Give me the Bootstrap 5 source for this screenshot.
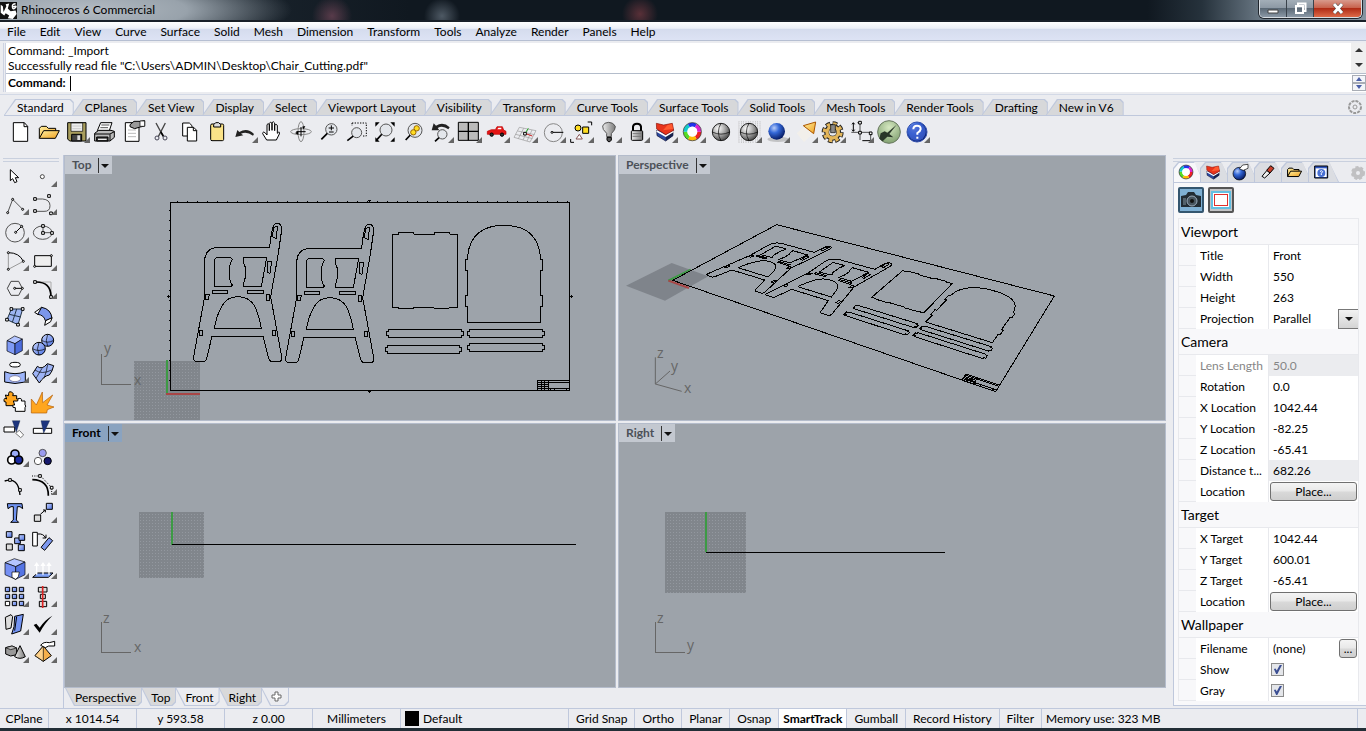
<!DOCTYPE html>
<html lang="en">
<head>
<meta charset="utf-8">
<meta name="viewport" content="width=device-width, initial-scale=1">
<title>Rhinoceros 6 Commercial</title>
<link href="https://cdn.jsdelivr.net/npm/bootstrap@5.3.0/dist/css/bootstrap.min.css" rel="stylesheet">
<style>
:root{--chrome:#ebecf0;--line:#bfc8dc;--canvas:#9da3aa}
body{font-family:Lato,"Open Sans",sans-serif;font-size:12px;line-height:16px;color:#000;background:var(--chrome);min-height:100vh}
button,input,select{font:inherit;color:inherit;border:0;background:none;padding:0}
button{line-height:16px}
svg{display:block}
a{color:inherit;text-decoration:none}
h1,h2{font-size:12px;line-height:16px;font-weight:400;margin:0}
.titlebar{height:22px;background:radial-gradient(ellipse 210px 40px at 82px 10px,#b4bcc4 0,#98a2ab 50%,transparent 100%),radial-gradient(circle 20px at 332px 16px,#583b4a,transparent),radial-gradient(circle 18px at 442px 16px,#4e5964,transparent),radial-gradient(circle 18px at 640px 14px,#593038,transparent),linear-gradient(90deg,#26323c 0,#101820 30%,#101820 84%,#26323c 88%,#8493a0 94%);border-bottom:2px solid #1a2029}
.titlebar h1{line-height:20px}
.winbtns{height:18px;border:1px solid #d8dde2;border-top:0;border-radius:0 0 5px 5px;overflow:hidden;box-shadow:0 0 0 1px #20262d}
.winbtns button{width:27px;background:linear-gradient(#a3aeb8,#8d99a5 45%,#5b6976 50%,#8b98a6);border-right:1px solid #39424b;display:grid;place-items:center}
.winbtns .shut{width:47px;background:linear-gradient(#d89a8c,#c8634e 45%,#b02c16 50%,#dd6a48);border:0}
.menubar{height:19px;background:linear-gradient(#fff 0,#eef0f8 35%,#d5dcee 40%,#dde3f4);border-bottom:1px solid #b6bfd2;padding-left:7px;gap:14px;line-height:20px}
.cmd{padding:2px 0 2px 3px;border-bottom:1px solid #d3d9e6}
.grip{width:3px;border:solid #cdd3e2;border-width:0 1px;flex:none}
.cmdhist{height:30px;background:#fff;line-height:15px;padding-left:2px}
.cmdline{height:19px;background:#fff;border-top:1px solid #b4bdcb;padding-left:2px}
.caret{width:1px;height:15px;background:#000}
.cmdline input{outline:0;min-width:0}
.scroller{width:15px;background:#efefef}
.spin{width:14px;height:8px;border:1px solid #a9adb5;background:#f4f5f9;display:grid;place-items:center}
.tabstrip{height:21px;padding:4px 0 0 0;border-bottom:1px solid var(--line)}
.ftab{position:relative;z-index:0;height:16px;padding:0 10px 0 13px;margin-right:-2px;line-height:18px;white-space:nowrap}
.ftab::before,.ftab::after{content:"";position:absolute;z-index:-1;inset:0;background:var(--line);clip-path:polygon(0 100%,11px 0,calc(100% - 3px) 0,100% 3px,100% 100%)}
.ftab::after{inset:1px 1px 0 1px;background:#d7d8da}
.ftab.active::after{background:var(--chrome)}
.toolbar{padding:2px 0 9px 2px}
.tool{position:relative;width:28px;height:28px;flex:none}
.tool svg,.ptab svg,.vp svg{fill:none;stroke:#000;stroke-width:3}
.more::after{content:"";position:absolute;right:0;bottom:3px;border:solid transparent;border-width:0 0 6px 6px;border-bottom-color:#666}
.side{width:64px;padding:3px 0 0 1px;flex:none;border-right:1px solid var(--line)}
.sidegrip{height:4px;margin:0 4px 0 2px;border:solid #c9d0de;border-width:1px 0}
.tools2{display:grid;grid-template-columns:28px 28px}
.views{display:grid;grid-template:266fr 265fr/552fr 548fr;gap:2px}
.vp{position:relative;background:var(--canvas);border:1px solid #b4bccb;overflow:hidden;min-width:0}
.vp text{font:14px "Open Sans",sans-serif;fill:#666;stroke:none}
.vtag{position:absolute;left:0;top:0;height:18px;background:#c3c8d0;color:#4c5158;font-weight:700;display:flex;align-items:center;padding-left:7px;gap:7px}
.vtag span:last-child{border-left:1px solid #333;padding:6px 3px 5px 2px}
.vtag i,.dd i{display:block;border:4px solid transparent;border-top-color:#111;border-bottom:0}
.vtag.active{background:#8aa3c0;color:#000}
.vtabs{height:20px;padding-left:1px}
.btab{position:relative;z-index:0;height:18px;line-height:20px;padding:0 6px 0 10px;margin-right:-1px}
.btab::before,.btab::after{content:"";position:absolute;z-index:-1;inset:0;background:var(--line);clip-path:polygon(0 0,100% 0,100% calc(100% - 4px),calc(100% - 4px) 100%,9px 100%)}
.btab::after{inset:0 1px 1px 1px;background:#d9d9da}
.btab.active::after{background:var(--chrome)}
.props{width:200px;flex:none;padding:3px 0 0 7px}
.ptabs{height:20px}
.ptab{position:relative;z-index:0;width:31px;margin-right:-4px;padding-left:3px}
.ptab::before,.ptab::after{content:"";position:absolute;z-index:-1;inset:0;background:var(--line);clip-path:polygon(0 100%,0 6px,5px 0,21px 0,100% 100%)}
.ptab::after{inset:1px 1px 0;background:#dbdde2}
.ptab.active::after{background:#f8f8fa}
.pbody{border:1px solid var(--line);border-right:0;background:#f8f8fa;padding:4px 7px 4px 4px}
.modebtn{width:26px;height:26px;border:2px solid #34566f;border-radius:2px;background:#7fb0d4;display:grid;place-items:center}
.modebtn.off{border-color:#555;background:#c3c4c6}
.psheet{margin-top:5px;border:solid #e8e9ed;border-width:1px 1px 0}
.psheet h2{font-size:14px;line-height:25px;height:26px;padding-left:2px;border-bottom:1px solid #e8e9ed}
.prow{display:grid;grid-template-columns:17px 73px minmax(0,1fr);height:21px;border-bottom:1px solid #e8e9ed}
.prow label{background:#fff;padding-left:4px;line-height:21px;border-right:1px solid #e8e9ed;white-space:nowrap}
.pval{background:#fff;display:flex;align-items:center;min-width:0}
.pval input[type=text],.pval select{width:100%;min-width:0;flex:1;padding:0 4px;appearance:none;line-height:18px;outline:0}
.dim .pval,.ro .pval{background:#ebecef}
.dim{color:#868686}
.place{flex:1;margin:0 1px;height:19px;border:1px solid #707070;border-radius:3px;background:linear-gradient(#f4f4f4,#e8e8e8 48%,#d9d9d9 52%,#cfcfcf)}
.dots{flex:0 0 18px}
.dd{width:20px;height:20px;flex:none;border:1px solid #777;border-right:0;background:linear-gradient(#f2f2f2,#d4d4d4);display:grid;place-items:center;pointer-events:none}
.pval input[type=checkbox]{appearance:none;width:13px;height:13px;margin-left:2px;border:1px solid #8b8b8b;background:#e4e6ea;position:relative}
.pval input:checked::before{content:"";position:absolute;inset:1px;background:#3c4f93;clip-path:polygon(10% 45%,28% 38%,42% 62%,75% 0,100% 0,48% 100%,35% 100%)}
.status{height:20px;border-top:1px solid var(--line);line-height:20px;white-space:nowrap}
.status>*{border-right:1px solid var(--line);padding:0 7px;line-height:20px}
.status .origin{flex:0 0 49px;padding:0}
.status .cell{flex:0 0 88px;text-align:center;padding:0}
.status .layer{flex:0 0 168px}
.status .memory{padding-left:4px}
.swatch{width:14px;height:15px;background:#000}
.taskbar{height:3px;background:#222e36}
</style>
</head>
<body class="d-flex flex-column">
<svg width="0" height="0" class="position-absolute" aria-hidden="true"><defs>
<radialGradient id="gBlue" cx=".35" cy=".3" r=".75"><stop offset="0" stop-color="#b9cdf8"/><stop offset=".4" stop-color="#3468d8"/><stop offset="1" stop-color="#04165c"/></radialGradient>
<radialGradient id="gGrey" cx=".35" cy=".3" r=".75"><stop offset="0" stop-color="#fff"/><stop offset=".5" stop-color="#aaa"/><stop offset="1" stop-color="#444"/></radialGradient>
<radialGradient id="gGreen" cx=".5" cy=".3" r=".75"><stop offset="0" stop-color="#d5e8c0"/><stop offset="1" stop-color="#7c9c6c"/></radialGradient>
<linearGradient id="gGold" x2="1" y2="1"><stop offset="0" stop-color="#fff0a0"/><stop offset="1" stop-color="#f0a020"/></linearGradient>
<linearGradient id="gSteel" x2="1" y2="1"><stop offset="0" stop-color="#c8d6ff"/><stop offset="1" stop-color="#4a6fe0"/></linearGradient>
<linearGradient id="gIron" x2="1" y2="0"><stop offset="0" stop-color="#eee"/><stop offset="1" stop-color="#777"/></linearGradient>
<pattern id="mesh" width="3" height="3" patternUnits="userSpaceOnUse"><rect width="3" height="3" fill="#81868c"/><rect width="1" height="1" fill="#93989f"/></pattern>
</defs></svg>

<header>
  <div class="titlebar d-flex align-items-start justify-content-between">
    <div class="d-flex align-items-center gap-1">
      <svg width="17" height="17" viewBox="0 0 48 48"><path fill="#111" d="M0 0H48V48H0Z"/><path fill="#fff" d="M2 8L8 12 10 28 18 12 16 6 26 4 22 18 30 26 44 24 47 34 36 48 22 46 26 38 16 32 12 38 2 30Z"/><path fill="none" stroke="#fff" stroke-width="4" d="M44 5Q34 5 35 14T43 16 35 14"/></svg>
      <h1>Rhinoceros 6 Commercial</h1>
    </div>
    <div class="winbtns d-flex me-1">
      <button aria-label="Minimize"><svg width="12" height="12"><path d="M1 7H11V10H1Z" fill="#fff" stroke="#444"/></svg></button>
      <button aria-label="Restore"><svg width="13" height="13" fill="none" stroke="#fff" stroke-width="2"><path d="M4 3V1.500H11.500V9H10"/><path d="M2 4H9V11H2Z"/></svg></button>
      <button class="shut" aria-label="Close"><svg width="12" height="11"><path d="M2 1L10 10M10 1L2 10" stroke="#444" stroke-width="4"/><path d="M2 1L10 10M10 1L2 10" stroke="#fff" stroke-width="3"/></svg></button>
    </div>
  </div>
  <nav class="menubar d-flex" id="menu"></nav>
  <section class="cmd d-flex" aria-label="Command history">
    <div class="grip"></div>
    <div class="flex-grow-1">
      <div class="d-flex"><div class="cmdhist flex-grow-1">Command: _Import<br>Successfully read file "C:\Users\ADMIN\Desktop\Chair_Cutting.pdf"</div>
        <div class="scroller d-flex flex-column justify-content-around align-items-center"><svg width="8" height="5"><path d="M0 4L4 0L8 4Z" fill="#333"/></svg><svg width="8" height="5"><path d="M0 0L4 4L8 0Z" fill="#333"/></svg></div></div>
      <div class="cmdline d-flex align-items-center gap-1"><label for="cmdin" class="fw-bold">Command:</label><span class="caret"></span><input id="cmdin" type="text" class="flex-grow-1">
        <span class="d-flex flex-column"><button class="spin" aria-label="Previous"><svg width="6" height="4"><path d="M0 4L3 0L6 4Z" fill="#4b5fa8"/></svg></button><button class="spin" aria-label="Next"><svg width="6" height="4"><path d="M0 0L3 4L6 0Z" fill="#4b5fa8"/></svg></button></span></div>
    </div>
  </section>
  <div class="ps-1">
    <div class="tabstrip d-flex" id="tabs"></div>
    <div class="toolbar d-flex" id="toolbar"></div>
  </div>
</header>

<main class="d-flex flex-grow-1">
  <aside class="side"><div class="sidegrip"></div><div class="tools2" id="side"></div></aside>
  <div class="flex-grow-1 d-flex flex-column">
    <div class="views flex-grow-1">
      <section class="vp"><svg width="100%" height="100%">
        <rect x="69" y="205" width="66" height="60" fill="url(#mesh)" stroke="none"/>
        <g stroke-width="2"><path d="M102 204V238" stroke="#3d9a45"/><path d="M101 238H135" stroke="#a84646"/></g>
        <path d="M36 198V228H66" stroke="#666" stroke-width="1" shape-rendering="crispEdges"/><text x="39" y="197">y</text><text x="69" y="229">x</text>
        <svg x="95" y="34" width="430" height="210" viewBox="0 0 1290 630" id="plan" shape-rendering="crispEdges"></svg></svg>
        <button class="vtag"><span>Top</span><span><i></i></span></button></section>
      <section class="vp"><svg width="100%" height="100%">
        <svg x="1" y="59" width="450" height="190" viewBox="0 0 1350 570"><path d="M18 212L155 144 265 184 135 257Z" fill="#7f848b" stroke="none"/><path d="M145 197L212 164" stroke="#3d9a45" stroke-width="6"/><path d="M145 197L207 219" stroke="#a84646" stroke-width="6"/><path d="M106 427V507L185 529M106 507L150 468" stroke="#666"/><g id="persp" shape-rendering="crispEdges"></g></svg>
        <text x="38" y="202">z</text><text x="52" y="215">y</text><text x="65" y="237">x</text></svg>
        <button class="vtag"><span>Perspective</span><span><i></i></span></button></section>
      <section class="vp"><svg width="100%" height="100%" shape-rendering="crispEdges">
        <rect x="74" y="88" width="65" height="66" fill="url(#mesh)" stroke="none"/><path d="M107 88V121" stroke="#3d9a45" stroke-width="2"/><path d="M107 120.500H511" stroke-width="1"/>
        <path d="M36 198V228H66" stroke="#666" stroke-width="1"/><text x="38" y="199">z</text><text x="69" y="228">x</text></svg>
        <button class="vtag active"><span>Front</span><span><i></i></span></button></section>
      <section class="vp"><svg width="100%" height="100%" shape-rendering="crispEdges">
        <rect x="46" y="88" width="81" height="81" fill="url(#mesh)" stroke="none"/><path d="M87 88V128" stroke="#3d9a45" stroke-width="2"/><path d="M87 128.500H326" stroke-width="1"/>
        <path d="M36 198V228H66" stroke="#666" stroke-width="1"/><text x="38" y="199">z</text><text x="68" y="226">y</text></svg>
        <button class="vtag"><span>Right</span><span><i></i></span></button></section>
    </div>
    <div class="vtabs d-flex"><button class="btab">Perspective</button><button class="btab">Top</button><button class="btab active">Front</button><button class="btab">Right</button><button class="btab active" aria-label="New viewport"><svg width="12" height="12"><path d="M4 1H7V4H10V7H7V10H4V7H1V4H4Z" fill="#fff" stroke="#666"/></svg></button></div>
  </div>
  <aside class="props">
    <div class="sidegrip mx-0"></div>
    <div class="ptabs d-flex" id="ptabs"></div>
    <div class="pbody">
      <div class="d-flex gap-1">
        <button class="modebtn" aria-label="Camera"><svg width="22" height="18" viewBox="0 0 22 18"><path d="M1 5L6 4 8 1H14L16 4 21 5V16H1Z" fill="#222c34"/><circle cx="12" cy="10" r="5" fill="#48555f" stroke="#9ab" /><circle cx="12" cy="10" r="2" fill="#111"/><path d="M3 7H6V14H3Z" fill="#53616b"/></svg></button>
        <button class="modebtn off" aria-label="Frame"><svg width="20" height="18" shape-rendering="crispEdges"><path d="M0 0H20V18H0Z" fill="#fff"/><path d="M1 1H19V17H1Z" fill="none" stroke="#62bfe2" stroke-width="2"/><path d="M3 3H17V15H3Z" fill="#e0302c"/><path d="M4 4H16V14H4Z" fill="#fff"/></svg></button>
      </div>
      <div class="psheet" id="sheet"></div>
    </div>
  </aside>
</main>

<footer>
  <div class="status d-flex" id="status">
    <button class="origin">CPlane</button><span class="cell">x 1014.54</span><span class="cell">y 593.58</span><span class="cell">z 0.00</span><button class="cell">Millimeters</button>
    <button class="layer d-flex align-items-center px-1"><span class="swatch me-1"></span>Default</button>
    <button>Grid Snap</button><button>Ortho</button><button>Planar</button><button>Osnap</button><button class="fw-bold bg-white px-1">SmartTrack</button><button>Gumball</button><button>Record History</button><button>Filter</button>
    <span class="memory flex-grow-1 me-2">Memory use: 323 MB</span>
  </div>
  <div class="taskbar"></div>
</footer>

<script src="https://cdn.jsdelivr.net/npm/bootstrap@5.3.0/dist/js/bootstrap.bundle.min.js"></script>
<script>
const $ = id => document.getElementById(id);
$('menu').innerHTML = 'File,Edit,View,Curve,Surface,Solid,Mesh,Dimension,Transform,Tools,Analyze,Render,Panels,Help'.split(',').map(t => `<a href="#">${t}</a>`).join('');
$('tabs').innerHTML = 'Standard,CPlanes,Set View,Display,Select,Viewport Layout,Visibility,Transform,Curve Tools,Surface Tools,Solid Tools,Mesh Tools,Render Tools,Drafting,New in V6'.split(',').map((t, i) => `<button class="ftab${i ? '' : ' active'}">${t}</button>`).join('') + '<button class="ms-auto me-1" aria-label="Options"><svg width="14" height="16" viewBox="1 0 14 16" fill="none" stroke="#999"><circle cx="8" cy="8" r="6" stroke-width="2" stroke-dasharray="3 1"/><circle cx="8" cy="8" r="2"/></svg></button>';

const wheel = (x, y, r) => ['#e22', '#fb0', '#5d2', '#1cc', '#23e', '#d2c'].map((c, i) => `<circle cx="${x}" cy="${y}" r="${r}" stroke="${c}" stroke-width="${r * .55}" pathLength="6" stroke-dasharray="1 5" stroke-dashoffset="${-i}"/>`).join('') + `<circle cx="${x}" cy="${y}" r="${r * 1.3}" stroke="#222" stroke-width="2"/><circle cx="${x}" cy="${y}" r="${r * .7}" fill="#fff" stroke="none"/>`;
const ball = (x, y, r, g = 'gGrey') => `<circle cx="${x}" cy="${y}" r="${r}" fill="url(#${g})" stroke="#222"/>`;
const meridians = (x, y, r) => `<path stroke-width="2" d="M${x - r} ${y}Q${x} ${y + r * .5} ${x + r} ${y}M${x} ${y - r}Q${x - r * .6} ${y} ${x} ${y + r}"/>`;
const nodes = (...p) => p.map(([x, y]) => `<path fill="#fff" d="M${x - 4} ${y - 4}h8v8h-8z"/>`).join('');
const dots = (...p) => p.map(([x, y]) => `<circle cx="${x}" cy="${y}" r="3" fill="#fff"/>`).join('');
const lens = (x, y, r, hx, hy) => `<circle cx="${x}" cy="${y}" r="${r}" fill="#dde3e8" fill-opacity=".6" stroke="#555"/><path stroke-width="5" d="M${x - r * .7} ${y + r * .7}L${hx} ${hy}"/>`;
// stacked slabs: dark blue base, white seam, red top with an orange face
const layers = (x, y) => `<path fill="#2b4aa0" stroke="#113" stroke-width="2" d="M${x - 25} ${y - 4}L${x + 24} ${y - 8}V${y + 12}L${x + 2} ${y + 28} ${x - 24} ${y + 12}Z"/><path fill="#17224e" stroke="none" d="M${x + 2} ${y + 12}L${x + 24} ${y - 2}V${y + 12}L${x + 2} ${y + 27}Z"/><path stroke="#fff" stroke-width="5" d="M${x - 25} ${y - 2}L${x + 2} ${y + 13} ${x + 25} ${y - 1}"/><path fill="#e8341c" stroke="#8a1005" stroke-width="2" d="M${x - 26} ${y - 25}L${x - 4} ${y - 20} ${x + 22} ${y - 25} ${x + 26} ${y - 4} ${x + 2} ${y + 9} ${x - 25} ${y - 8}Z"/><path fill="#ff5a30" stroke="none" d="M${x - 6} ${y - 4}L${x + 8} ${y - 20} ${x + 21} ${y - 23} ${x + 24} ${y - 8}Z"/>`;
const folder = (x, y, s = 1) => `<path stroke-width="3" fill="url(#gGold)" d="M${x - 29 * s} ${y + 18 * s}V${y - 12 * s}l${6 * s} ${-6 * s}h${15 * s}l${6 * s} ${6 * s}H${x + 20 * s}V${y - 5 * s}"/><path fill="url(#gGold)" d="M${x - 29 * s} ${y + 18 * s}L${x - 16 * s} ${y - 5 * s}H${x + 31 * s}L${x + 19 * s} ${y + 18 * s}Z"/>`;
const cog = (x, y, r, f) => `<circle cx="${x}" cy="${y}" r="${r}" stroke="#222" stroke-width="16" pathLength="16" stroke-dasharray="1.300 .7"/><circle cx="${x}" cy="${y}" r="${r - 7}" stroke="#222" stroke-width="15"/><circle cx="${x}" cy="${y}" r="${r}" stroke="${f}" stroke-width="10" pathLength="16" stroke-dasharray="1 1" stroke-dashoffset="-.15"/><circle cx="${x}" cy="${y}" r="${r - 8}" stroke="${f}" stroke-width="10"/>`;

// name, has flyout, drawing
const bar = [
['New',0,`<path fill="#fff" d="M40 368H73L83 379V424H40Z"/><path d="M72 368V380H83"/>`],
['Open',0,folder(147,397)],
['Save',1,`<path fill="#a89d5c" d="M203 368H258V423H209L203 417Z"/><path fill="#eee" stroke-width="2" d="M213 369H248V394H213Z"/><path fill="#444" d="M215 403H245V423H215Z"/><path fill="#ddd" stroke="none" d="M232 406H240V420H232Z"/><path d="M217 378H244M217 386H244" stroke="#bbb" stroke-width="2"/>`],
['Print',0,`<path fill="#fff" d="M302 368H336L328 392H292Z"/><path d="M304 375H328M301 383H324" stroke-width="2"/><path fill="#bbb" d="M284 400L296 391H333L343 394V412L330 423H284Z"/><path d="M284 402H330L343 395M330 403V422" stroke-width="3"/><path fill="#333" d="M290 411H324V423H290Z"/><path fill="#eee" stroke="none" d="M294 416H320V420H294Z"/>`],
['Properties',0,`<path fill="#fff" d="M376 368H417V424H376Z"/><path stroke="#bbb" d="M384 390H408M384 400H408M384 410H408"/><path fill="#999" d="M390 374L402 364H420L434 362V378L420 381 404 386 390 380Z"/><path fill="#fff" stroke-width="2" d="M420 363H434V379H420Z"/>`],
['Cut',0,`<path stroke="#444" stroke-width="4" d="M468 369L490 410M496 369L475 410"/><path d="M482 395L490 408" stroke-width="5"/><circle cx="471" cy="414" r="6" stroke="#445"/><circle cx="495" cy="414" r="6" stroke="#445"/>`],
['Copy',0,`<path fill="#fff" d="M548 369H568L576 377V408H548Z"/><path fill="#fff" d="M562 382H581L590 391V423H562Z"/><path d="M580 382V392H590"/>`],
['Paste',0,`<rect x="632" y="372" width="39" height="50" rx="4" fill="#fbe388"/><path fill="#ddd" d="M641 381V374L647 368H656L662 374V381Z"/>`],
['Undo',1,`<path fill="#222" stroke="none" d="M706 411L712 390 718 396Q742 382 762 402L759 407Q740 393 723 401L730 406Z"/>`],
['Pan',0,`<path fill="#fff" d="M800 420L788 401Q788 393 796 399L801 405V374Q804 368 808 374V392 370Q811 363 816 370V391 368Q820 362 824 369V392 376Q828 370 832 376V400Q840 391 838 402L829 420Z"/>`],
['Rotate View',0,`<ellipse cx="903" cy="395" rx="31" ry="9" stroke="#888"/><ellipse cx="903" cy="395" rx="9" ry="30" stroke="#888"/><path d="M889 395H917M903 381V409"/><path fill="#000" stroke="none" d="M885 399L895 394V405ZM911 388L916 378 906 380Z"/>`],
['Zoom',0,lens(994,388,17,964,418)+`<path d="M986 384H1002M994 376V391M987 396H1001"/>`],
['Zoom Window',0,`<path stroke-dasharray="4 4" d="M1056 369H1099V408H1085M1056 369V378"/>`+lens(1070,398,15,1042,422)],
['Zoom Extents',0,lens(1158,390,18,1131,419)+`<path fill="#000" stroke="none" d="M1126 367H1139L1126 380ZM1184 367H1171L1184 380ZM1126 425H1139L1126 412ZM1184 425H1171L1184 412Z"/>`],
['Zoom Selected',0,lens(1245,391,21,1217,420)+`<circle cx="1250" cy="385" r="8" fill="#fd2" stroke="#960"/><circle cx="1240" cy="397" r="8" fill="#fd2" stroke="#960"/>`],
['Undo View',1,lens(1327,403,14,1305,424)+`<path fill="#222" stroke="none" d="M1295 391L1301 370 1308 377Q1330 364 1349 382L1345 388Q1328 375 1313 384L1318 391Z"/>`],
['4 Viewports',1,`<path fill="#bbb" d="M25 97H85V151H25Z"/><path stroke-width="4" d="M55 97V151M25 124H85"/>`],
['Car',1,`<path fill="#e41515" stroke="#b00" stroke-width="2" d="M112 124L124 119H136L141 110H157L161 120 168 124V133H112Z"/><circle cx="125" cy="134" r="5" fill="#333"/><circle cx="156" cy="134" r="5" fill="#333"/><path fill="#fff" stroke="none" d="M142 118L145 113H154V118Z"/>`],
['CPlane',1,`<path stroke="#999" stroke-width="2" d="M192 142L208 112 258 122 240 156ZM197 133L248 146M203 123L254 134M205 146L221 115M219 150L234 118M231 153L246 120"/>`+nodes([225,131])+`<path stroke="#c22" d="M230 132L247 138"/><path stroke="#2a2" d="M228 126L235 115"/>`],
['Set Radius',1,`<circle cx="310" cy="128" r="27" stroke="#888"/><path d="M306 127H340"/>`+dots([306,127])],
['Groups',1,`<circle cx="384" cy="114" r="9" fill="#fd2"/><path fill="#fd2" d="M398 111H416V130H398Z"/><path fill="#fff" stroke="#855" d="M388 133L397 147H378Z"/><path d="M413 96H425V106M362 147V157H372"/>`],
['Show',1,`<path fill="url(#gIron)" stroke="#555" d="M470 140V130Q456 118 458 108Q462 97 476 97T496 109Q497 119 484 131V140Z"/><path fill="#555" d="M471 142H484V151L477 156 471 151Z"/>`],
['Lock',1,`<path d="M549 124V110Q550 101 561 101T573 110V124" stroke-width="6"/><rect x="544" y="122" width="34" height="29" rx="3" fill="url(#gIron)"/><path d="M548 131H574M548 139H574" stroke="#777"/>`],
['Layers',1,layers(645,125)],
['Colour',1,wheel(727,125,21)],
['Shade',0,ball(813,126,26)+meridians(813,126,26)],
['Rendered',1,`<path stroke="#bbb" stroke-width="66" stroke-dasharray="2 5" d="M866 126H932"/><path stroke="#ebecf0" stroke-width="2" d="M866 97H932M866 104H932M866 111H932M866 118H932M866 125H932M866 132H932M866 139H932M866 146H932M866 153H932"/>`+ball(897,126,26)+meridians(897,126,26)],
['Render',1,`<ellipse cx="984" cy="148" rx="32" ry="8" fill="#999" opacity=".5" stroke="none"/><circle cx="980" cy="124" r="25" fill="url(#gBlue)" stroke="none"/>`],
['Spotlight',1,`<path fill="#f4f0e8" stroke="none" d="M1040 130L1070 104 1090 130 1062 156Z" opacity=".8"/><path fill="url(#gGold)" stroke="#a50" d="M1060 107L1097 96 1091 131Z"/>`],
['Options',1,cog(1148,127,25,'#e3b65a')+`<path fill="#888" stroke-width="2" d="M1142 104H1156V128H1142Z"/>`],
['Dimensions',1,`<path d="M1210 99V123M1206 103L1210 98 1214 103M1206 119L1210 124 1214 119M1237 152H1262"/><path d="M1222 98H1230V127H1262V150M1204 127H1230V150" stroke-width="2"/>`+nodes([1230,98],[1230,128],[1262,130])],
['Grasshopper',0,`<circle cx="1317" cy="126" r="34" fill="url(#gGreen)" stroke="#687860"/><path fill="#293628" stroke="none" d="M1288 146L1292 130 1304 124 1312 128 1340 104 1318 132 1330 142 1312 140 1298 154Z"/>`],
['Help',1,`<circle cx="1401" cy="126" r="30" fill="url(#gBlue)" stroke="#3450b0"/><circle cx="1401" cy="126" r="26" fill="#3d5fd0" opacity=".8" stroke="none"/><path stroke="#fff" stroke-width="6" d="M1390 118Q1390 107 1401 107T1412 117Q1411 124 1402 129V134M1402 140V146"/>`]
];
const btn = ([n, m, s], x, y) => `<button class="tool${m ? ' more' : ''}" aria-label="${n}"><svg width="28" height="28" viewBox="${x} ${y} 84 84">${s}</svg></button>`;
$('toolbar').innerHTML = bar.map((b, i) => i < 16 ? btn(b, 18 + 84 * i, 354) : btn(b, 12 + 84 * (i - 16), 84)).join('');

const box = (x, y, s, f = 'url(#gSteel)') => `<path fill="${f}" d="M${x} ${y}h${s}v${s}h${-s}z"/>`;
const side = [
['Select',0,`<path fill="#fff" d="M31 44V77L38 71 44 83 51 80 46 68H56Z"/>`],
['Point',1,`<circle cx="127" cy="65" r="6" fill="#fff" stroke="#444"/>`],
['Polyline',1,`<path stroke="#555" d="M23 173L38 133 68 163"/>`+dots([23,173],[38,133],[68,163])],
['Curve',1,`<path stroke="#555" d="M105 132H128Q150 134 150 152T132 169H105"/>`+nodes([105,132],[147,123],[105,168],[153,175])],
['Circle',1,`<circle cx="45" cy="233" r="28" stroke="#555"/><path d="M47 232L65 214"/>`+dots([47,232],[65,214])],
['Ellipse',1,`<ellipse cx="128" cy="233" rx="28" ry="20" stroke="#555"/><path d="M129 214V233H155" stroke="#555"/>`+nodes([129,213],[129,234],[156,234])],
['Arc',1,`<path d="M25 293Q58 293 70 319"/><path stroke="#999" d="M25 293V343L70 319"/>`+dots([25,293],[25,343],[70,319])],
['Rectangle',1,`<path fill="#eee" d="M104 302H154V334H104Z"/>`+dots([104,334],[154,302])],
['Polygon',1,`<path d="M22 400L33 379H56L67 400 56 421H33Z" stroke="#444"/><path d="M44 400H67"/>`+dots([44,400],[67,400])],
['Fillet',1,`<path stroke="#aaa" d="M105 381H153V426"/><path stroke-width="5" d="M105 381Q153 379 153 426"/>`+nodes([105,381],[153,426])],
['Surface',1,`<path fill="#9db5f2" stroke="#234" d="M34 462H68L54 509 21 494Z"/><path stroke="#234" d="M50 462L37 502M28 478L62 486"/>`+nodes([34,462],[68,462],[54,509],[21,494])],
['Patch',1,`<path fill="#fff" d="M104 472L125 457 134 463 113 478Z"/><path fill="#7b96ea" d="M113 478L125 457Q153 462 156 490L136 497Q132 480 113 478Z"/><path fill="#fff" d="M137 497L156 488 152 500 134 511Z"/>`],
['Box',1,`<g stroke-width="2"><path fill="#b4c5ff" d="M21 557L44 543 67 552 45 566Z"/><path fill="#7f9af6" d="M21 557L45 566V599L21 588Z"/><path fill="#4d6cdc" d="M45 566L67 552V587L45 599Z"/></g>`],
['Sphere union',1,`<circle cx="143" cy="556" r="18" fill="url(#gSteel)"/><circle cx="117" cy="581" r="19" fill="url(#gSteel)"/><path stroke-width="2" d="M98 581Q117 592 136 581M117 562Q108 581 117 600M125 556Q143 567 161 556M143 538Q135 556 143 574"/>`],
['Boundary',1,`<ellipse cx="45" cy="629" rx="16" ry="7" fill="#fff"/><path fill="#9cb4fa" d="M14 650Q45 662 76 650V681Q45 690 14 681Z"/><ellipse cx="45" cy="671" rx="17" ry="9" fill="#fff" stroke="#88a"/>`],
['Heightfield',1,`<path fill="#9db3f6" d="M98 656L112 634Q126 646 142 626L161 632Q157 650 148 660Q132 662 118 684Z"/><path stroke-width="2" d="M105 645Q125 660 155 645M126 640L108 670M143 628Q140 650 132 670"/>`],
['Puzzle',0,`<path fill="#ffa61f" d="M16 720L26 722Q24 707 34 711T38 722L50 722V732Q60 730 58 738T49 742V752H18V741Q10 742 12 734T20 732Z"/><path fill="#fff" d="M40 738H53Q52 728 60 730T64 738H75V750Q80 752 75 758V769H46V758Q36 760 38 750H44Z"/>`],
['Explode',0,`<path fill="#ffa61f" stroke="#b45a00" stroke-width="2" d="M94 774V732L109 750 127 711 128 743 158 720 141 750 162 756 142 764 140 774Z"/>`],
['Trim',0,`<path fill="#fff" d="M12 51H44V66H12Z"/><path fill="#fff" stroke="#777" d="M47 70L58 61 71 75 62 83Z"/><path fill="#1d357e" stroke="#123" stroke-width="1" d="M37 32H60L49 66Z"/>`],
['Split',0,`<path fill="#fff" d="M100 55H155V70H100Z"/><path fill="#1d357e" stroke="#123" stroke-width="1" d="M123 32H149L131 70Z"/>`],
['Group',1,`<circle cx="45" cy="132" r="12" fill="#9bacf8" stroke-width="5"/><circle cx="35" cy="150" r="12" fill="#fff" stroke-width="5"/><circle cx="56" cy="150" r="12" fill="#1c2ba0" stroke-width="5"/>`],
['Ungroup',0,`<circle cx="128" cy="129" r="11" fill="#9b9cf0" stroke="#555"/><circle cx="114" cy="153" r="11" fill="#fff" stroke="#555"/><circle cx="143" cy="153" r="11" fill="#15186c"/>`],
['Edit Points',0,`<path stroke-width="4" d="M14 213Q55 200 60 255"/>`+nodes([30,210],[60,240])],
['Control Points',1,`<path stroke-width="5" d="M97 209Q146 210 145 257"/><path stroke-dasharray="3 4" d="M96 198H122L155 233V254"/>`+nodes([120,198],[155,233])],
['Text',0,`<path fill="#6f92ee" d="M22 281H66L68 296 60 290H52L49 330 56 337H32L40 330V290H33L24 296Z"/>`],
['Scale',1,box(103,315,19,'#ddd')+box(139,280,18)+`<path d="M121 313L136 300M129 300H136V307"/>`],
['Array',0,box(19,365,17)+box(44,384,17)+box(57,374,17)+box(19,402,18,'#ddd')+box(55,404,18)],
['Orient',0,`<path fill="#fff" d="M98 367H112V408H98Z"/><path fill="#7d98ee" d="M123 412L147 383 158 392 134 421Z"/><path d="M114 372Q130 370 137 384M128 384H138V374"/>`],
['Solid',1,`<g stroke-width="2"><path fill="#b4c5ff" d="M15 458L43 446 75 456 47 470Z"/><path fill="#7590f4" d="M15 458L47 470V508L15 494Z"/><path fill="#5575e4" d="M47 470L75 456V494L47 508Z"/><path fill="#fff" d="M36 486H58L55 500 47 508 36 502Z"/></g>`],
['Extrude',1,`<path fill="#7da0f4" d="M98 502L113 489H159L145 502Z"/><path stroke="#fff" stroke-width="4" d="M110 494V462M129 494V462M147 494V462"/><path fill="#fff" stroke="none" d="M102 468L110 456 118 468ZM121 468L129 456 137 468ZM139 468L147 456 155 468Z"/>`],
['Grid Array',1,[[0,0],[1,0],[2,0],[0,1],[1,1],[2,1],[1,2],[2,2]].map(([a,b])=>box(16+21*a,532+21*b,13)).join('')+box(16,574,13,'#fff')],
['Align',1,`<path fill="#ddd" d="M115 532H141V546H115ZM121 553H136V566H121ZM118 574H140V590H118Z"/><path stroke="#d22" stroke-width="5" d="M128 528V594"/>`],
['Flow',1,`<path fill="#ddd" d="M16 622L33 614 38 620 33 654 18 658Z"/><path fill="#7595f4" d="M44 619L70 613 62 663 35 672 42 650Z"/><path d="M50 620L44 662"/>`],
['Check',1,`<path fill="#000" stroke="none" d="M101 645L109 641 119 653Q134 630 157 617Q132 642 119 668Z"/>`],
['Mesh',1,`<path fill="#999" d="M17 713L36 708 50 714V734L32 738 17 732Z"/><path fill="#bbb" stroke-width="2" d="M17 713L36 708 50 714 32 719Z"/><path fill="url(#gIron)" d="M60 707L76 740Q60 750 44 740Z"/>`],
['Render Tools',1,`<path fill="#f6b04c" d="M105 737L130 708 154 737 130 754Z"/><path fill="#ffd28a" stroke-width="2" d="M105 737L130 708V754Z"/><path fill="#fff" d="M122 706Q130 694 148 698L164 694V708H146L136 713Z"/>`]
];
$('side').innerHTML = side.map((b, i) => { const r = i >> 1; return btn(b, 3 + 84 * (i & 1), r < 9 ? 21 + 84 * r : 12 + 84 * (r - 9)); }).join('');

const ptabs = [wheel(62,57,16), `<g transform="translate(36 15) scale(.75)">${layers(143,57)}</g>`, `<circle cx="222" cy="62" r="19" fill="url(#gBlue)" stroke-width="2"/><path fill="#fff" stroke-width="2" d="M222 48L232 36 248 34V46L234 52Z"/>`, `<path fill="#eee" d="M290 70L305 52 314 60 298 75Z"/><path fill="#c8402c" d="M304 52L316 38 326 46 314 60Z"/>`, folder(387,58,.7), `<path fill="#3157c0" d="M448 39H487V75H448Z"/><path fill="#fff" stroke="none" d="M451 46H484V72H451Z"/><circle cx="468" cy="60" r="12" fill="#4870d4" stroke="none"/><path stroke="#fff" d="M464 56Q468 50 472 56L468 61V66"/>`];
$('ptabs').innerHTML = ptabs.map((s, i) => `<button class="ptab${i ? '' : ' active'}" aria-label="Panel ${i + 1}"><svg width="20" height="20" viewBox="${32 + 81 * i} 27 60 60">${s}</svg></button>`).join('') + '<button class="ms-auto" aria-label="Panel options"><svg width="18" height="18" fill="none" stroke="#c0c0c2"><circle cx="10" cy="10" r="4" stroke-width="4"/><circle cx="10" cy="10" r="6" stroke-width="2" stroke-dasharray="3 2"/></svg></button>';

const sheet = {
  Viewport: [['Title','Front'],['Width','550'],['Height','263'],['Projection','Parallel','select']],
  Camera: [['Lens Length','50.0','dim'],['Rotation','0.0'],['X Location','1042.44'],['Y Location','-82.25'],['Z Location','-65.41'],['Distance t...','682.26','ro'],['Location','Place...','place']],
  Target: [['X Target','1042.44'],['Y Target','600.01'],['Z Target','-65.41'],['Location','Place...','place']],
  Wallpaper: [['Filename','(none)','file'],['Show','','check'],['Gray','','check']]
};
let n = 0;
$('sheet').innerHTML = Object.entries(sheet).map(([h, rows]) => `<h2>${h}</h2>` + rows.map(([l, v, k]) => {
  const id = 'p' + n++;
  const text = `<input type="text" id="${id}" value="${v}"${k == 'dim' ? ' disabled' : k == 'ro' ? ' readonly' : ''}>`;
  const c = k == 'select' ? `<select id="${id}"><option>${v}</option></select><span class="dd"><i></i></span>` : k == 'place' ? `<button id="${id}" class="place">${v}</button>` : k == 'check' ? `<input type="checkbox" id="${id}" checked>` : text + (k == 'file' ? '<button class="place dots" aria-label="Browse">...</button>' : '');
  return `<div class="prow ${k == 'dim' || k == 'ro' ? k : ''}"><span></span><label for="${id}">${l}</label><div class="pval">${c}</div></div>`;
}).join('')).join('');

// Cutting plan: x shift, y shift, outlines. The perspective view projects the same outlines.
const chair = ['M134 320L134 215Q134 172 178 172L329 172Q332 140 337 118Q340 100 352 100Q366 102 365 120L355 190L332 320L365 500Q366 514 358 514L335 514Q328 514 326 505L309 439L156 439L140 505Q138 514 132 514L106 514Q100 512 101 500L134 320',
'M174 203L212 203Q220 205 214 215Q206 230 210 245L209 262Q209 275 217 285L213 290L164 290L164 213Q164 203 174 203','M250 203L320 203L304 290L250 290L252 275Q258 262 257 245Q258 232 252 222Z',
'M157 301L203 301L203 310L157 310Z','M262 301L311 301L311 310L262 310Z','M163 415L304 415Q295 370 285 350Q268 320 233 320Q200 320 185 350Q170 375 163 415',
'M340 112L353 110L348 146L338 140Z','M323 215L335 214L330 250L322 248Z','M137 314L148 313L145 328L136 328Z','M319 314L329 314L329 330L320 330Z','M118 421L127 421L127 436L119 436Z','M338 421L347 421L347 437L338 437Z'];
const slat = (x, y, w) => `M${x + 6} ${y}L${x + w - 6} ${y}L${x + w - 6} ${y + 5}L${x + w} ${y + 5}L${x + w} ${y + 19}L${x + w - 6} ${y + 19}L${x + w - 6} ${y + 24}L${x + 6} ${y + 24}L${x + 6} ${y + 19}L${x} ${y + 19}L${x} ${y + 5}L${x + 6} ${y + 5}Z`;
const plates = ['M67 133L85 133L87 127L130 127L132 133L193 133L195 127L238 127L240 133L263 133L263 352L240 352L236 355L193 355L191 352L132 352L130 355L87 355L85 352L67 352Z',
'M292 397L292 349L286 349L286 317L292 317L292 241L286 241L286 208L292 208Q298 106 402 106Q506 106 512 208L518 208L518 241L512 241L512 317L518 317L518 349L512 349L512 397Z',
slat(49,418,231),slat(46,466,229),slat(292,418,231),slat(292,460,231),
'M502 571L598 571L598 601L502 601ZM502 577L598 577M502 583L536 583M502 589L536 589M502 594L598 594M513 571L513 601M524 571L524 601M536 571L536 601M540 594L540 601M554 594L554 601M589 594L589 601'];
const frame = 'M31 37L1228 37L1228 601L31 601Z';
const shapes = [[0,0,[frame]],[0,0,chair],[276,3,chair],[630,0,plates]];
const map = (d, f) => d.replace(/(\d+) (\d+)/g, (_, x, y) => f(+x, +y).map(Math.round).join(' '));
const draw = f => shapes.map(([dx, dy, list]) => list.map(d => `<path d="${map(d, (x, y) => f(x + dx, y + dy))}"/>`).join('')).join('');
$('plan').innerHTML = draw((x, y) => [x, y]) + '<path stroke-dasharray="3 27" stroke-width="4" d="M52 34H1228M28 60V590"/><path d="M623 32H633M628 29V37M623 605H633M628 601V609M21 320H31M26 315V325M1228 320H1238M1233 315V325"/>';
const [x0,y0,x1,y1,x2,y2,x3,y3] = [470,29,1303,243,1127,530,158,196];
const sx = x0-x1+x2-x3, sy = y0-y1+y2-y3, k = (x1-x2)*(y3-y2)-(x3-x2)*(y1-y2);
const g = (sx*(y3-y2)-sy*(x3-x2))/k, h = ((x1-x2)*sy-(y1-y2)*sx)/k;
const project = (x, y) => { const u = (x-31)/1197, v = (y-37)/564, w = g*u+h*v+1; return [((x1-x0+g*x1)*u+(x3-x0+h*x3)*v+x0)/w, ((y1-y0+g*y1)*u+(y3-y0+h*y3)*v+y0)/w]; };
$('persp').innerHTML = draw(project);
</script>
</body>
</html>
